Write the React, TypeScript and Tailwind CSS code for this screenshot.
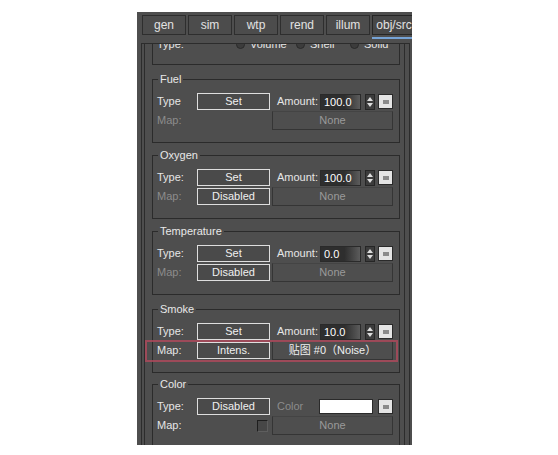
import type { ReactNode } from 'react'

const tabs = ['gen', 'sim', 'wtp', 'rend', 'illum', 'obj/src']

function Label({ text, dim = false }: { text: string; dim?: boolean }) {
  return (
    <span className={`w-[40px] shrink-0 ${dim ? 'text-[#8c8c8c]' : 'text-[#e6e6e6]'}`}>{text}</span>
  )
}

function Btn({ text }: { text: string }) {
  return (
    <div className="h-[17px] w-[73px] shrink-0 border border-[#dedede] bg-[#4a4a4a] text-center leading-[15px] text-[#f0f0f0]">
      {text}
    </div>
  )
}

function MapField({ text = 'None', bright = false }: { text?: string; bright?: boolean }) {
  return (
    <div
      className={`ml-[2px] h-[19px] w-[121px] shrink-0 border border-[#353535] border-t-[#444] bg-[#4e4e4e] text-center leading-[17px] ${
        bright ? 'text-[#f0f0f0]' : 'text-[#9a9a9a]'
      }`}
    >
      {text}
    </div>
  )
}

function Spinner() {
  return (
    <svg width="10" height="16" viewBox="0 0 10 16" className="ml-[4px] shrink-0">
      <rect x="0.5" y="0.5" width="9" height="15" fill="#3c3c3c" stroke="#262626" />
      <path d="M5 3 L8 7 H2 Z" fill="#dcdcdc" />
      <path d="M5 13 L8 9 H2 Z" fill="#dcdcdc" />
    </svg>
  )
}

function MinusBtn({ className = 'ml-[3px]' }: { className?: string }) {
  return (
    <div className={`flex h-[15px] w-[15px] shrink-0 items-center justify-center border border-[#2a2a2a] bg-[#e4e4e4] ${className}`}>
      <span className="h-[4px] w-[6px] bg-[#8a8a8a]" />
    </div>
  )
}

function Amount({ value }: { value: string }) {
  return (
    <>
      <span className="ml-[7px] w-[43px] shrink-0 text-[#e6e6e6]">Amount:</span>
      <div className="h-[16px] w-[41px] shrink-0 border border-[#2a2a2a] bg-linear-to-r from-[#2e2e2e] from-60% to-[#5c5c5c] pl-[3px] leading-[14px] text-white">
        {value}
      </div>
      <Spinner />
      <MinusBtn />
    </>
  )
}

function Row({ children }: { children: ReactNode }) {
  return <div className="flex h-[17px] items-center">{children}</div>
}

function Group({ title, className = '', children }: { title: string; className?: string; children: ReactNode }) {
  return (
    <div className={`relative ml-[7px] mr-[4px] h-[64px] shrink-0 border border-[#2b2b2b] ${className}`}>
      <span className="absolute -top-[8px] left-[5px] bg-[#4e4e4e] px-[2px] leading-[14px] text-[#e8e8e8]">
        {title}
      </span>
      <div className="flex flex-col gap-[2px] pl-[4px] pt-[13px]">{children}</div>
    </div>
  )
}

function Radio({ label, width }: { label: string; width: string }) {
  return (
    <div className={`flex items-center ${width}`}>
      <span className="h-[9px] w-[9px] rounded-full border border-[#2a2a2a] bg-[#3c3c3c]" />
      <span className="ml-[5px] text-[#e6e6e6]">{label}</span>
    </div>
  )
}

export default function App() {
  return (
    <div className="h-[455px] w-[558px] overflow-hidden bg-white pt-[12px] font-['Liberation_Sans','Noto_Sans_CJK_SC',sans-serif] text-[11px]">
      <div className="ml-[137px] flex h-[433px] w-[275px] flex-col overflow-hidden bg-[#4e4e4e]">
        {/* Tabs */}
        <div className="flex h-[31px] shrink-0 gap-[2px] pl-[5px] pt-[3px]">
          {tabs.map((t) => {
            const active = t === 'obj/src'
            return (
              <div key={t} className="flex w-[44px] shrink-0 flex-col">
                <div
                  className={`h-[20px] border text-center text-[12px] leading-[18px] text-[#e2e2e2] ${
                    active ? 'border-[#262626] bg-[#474747]' : 'border-[#2e2e2e] bg-[#4c4c4c]'
                  }`}
                >
                  {t}
                </div>
                {active && <div className="mt-[2px] h-[2px] bg-[#76a3d6]" />}
              </div>
            )
          })}
        </div>

        {/* Scrolled rollout */}
        <div className="ml-[4px] mr-[2px] flex min-h-0 flex-1 overflow-hidden border-x border-t border-[#2c2c2c]">
          <div className="ml-[2px] mr-[4px] flex flex-1 flex-col border-x border-[#2c2c2c]">
            <div className="ml-[7px] mr-[4px] -mt-[14px] h-[35px] shrink-0 border border-[#2b2b2b] pl-[4px] pt-[7px]">
              <div className="flex h-[13px] items-center leading-[13px]">
                <span className="w-[79px] text-[#e6e6e6]">Type:</span>
                <Radio label="Volume" width="w-[60px]" />
                <Radio label="Shell" width="w-[54px]" />
                <Radio label="Solid" width="w-[45px]" />
              </div>
            </div>

            <Group title="Fuel" className="mt-[14px]">
              <Row>
                <Label text="Type" />
                <Btn text="Set" />
                <Amount value="100.0" />
              </Row>
              <Row>
                <Label text="Map:" dim />
                <div className="w-[73px] shrink-0" />
                <MapField />
              </Row>
            </Group>

            <Group title="Oxygen" className="mt-[12px]">
              <Row>
                <Label text="Type:" />
                <Btn text="Set" />
                <Amount value="100.0" />
              </Row>
              <Row>
                <Label text="Map:" dim />
                <Btn text="Disabled" />
                <MapField />
              </Row>
            </Group>

            <Group title="Temperature" className="mt-[12px]">
              <Row>
                <Label text="Type:" />
                <Btn text="Set" />
                <Amount value="0.0" />
              </Row>
              <Row>
                <Label text="Map:" dim />
                <Btn text="Disabled" />
                <MapField />
              </Row>
            </Group>

            <Group title="Smoke" className="mt-[14px]">
              <Row>
                <Label text="Type:" />
                <Btn text="Set" />
                <Amount value="10.0" />
              </Row>
              <Row>
                <Label text="Map:" />
                <Btn text="Intens." />
                <MapField text="贴图 #0（Noise）" bright />
              </Row>
              {/* annotation highlight */}
              <div className="pointer-events-none absolute -left-[8px] top-[30px] h-[22px] w-[253px] border-2 border-[#b24a5c]/80" />
            </Group>

            <Group title="Color" className="mt-[11px]">
              <Row>
                <Label text="Type:" />
                <Btn text="Disabled" />
                <span className="ml-[7px] w-[42px] shrink-0 text-[#8c8c8c]">Color</span>
                <div className="h-[15px] w-[54px] shrink-0 border border-[#2a2a2a] bg-white" />
                <MinusBtn className="ml-[5px]" />
              </Row>
              <Row>
                <Label text="Map:" />
                <div className="ml-[60px] h-[12px] w-[11px] shrink-0 border border-[#5e5e5e] border-l-[#1e1e1e] border-t-[#1e1e1e] bg-[#474747]" />
                <div className="w-[2px] shrink-0" />
                <MapField />
              </Row>
            </Group>
          </div>
        </div>
      </div>
    </div>
  )
}
